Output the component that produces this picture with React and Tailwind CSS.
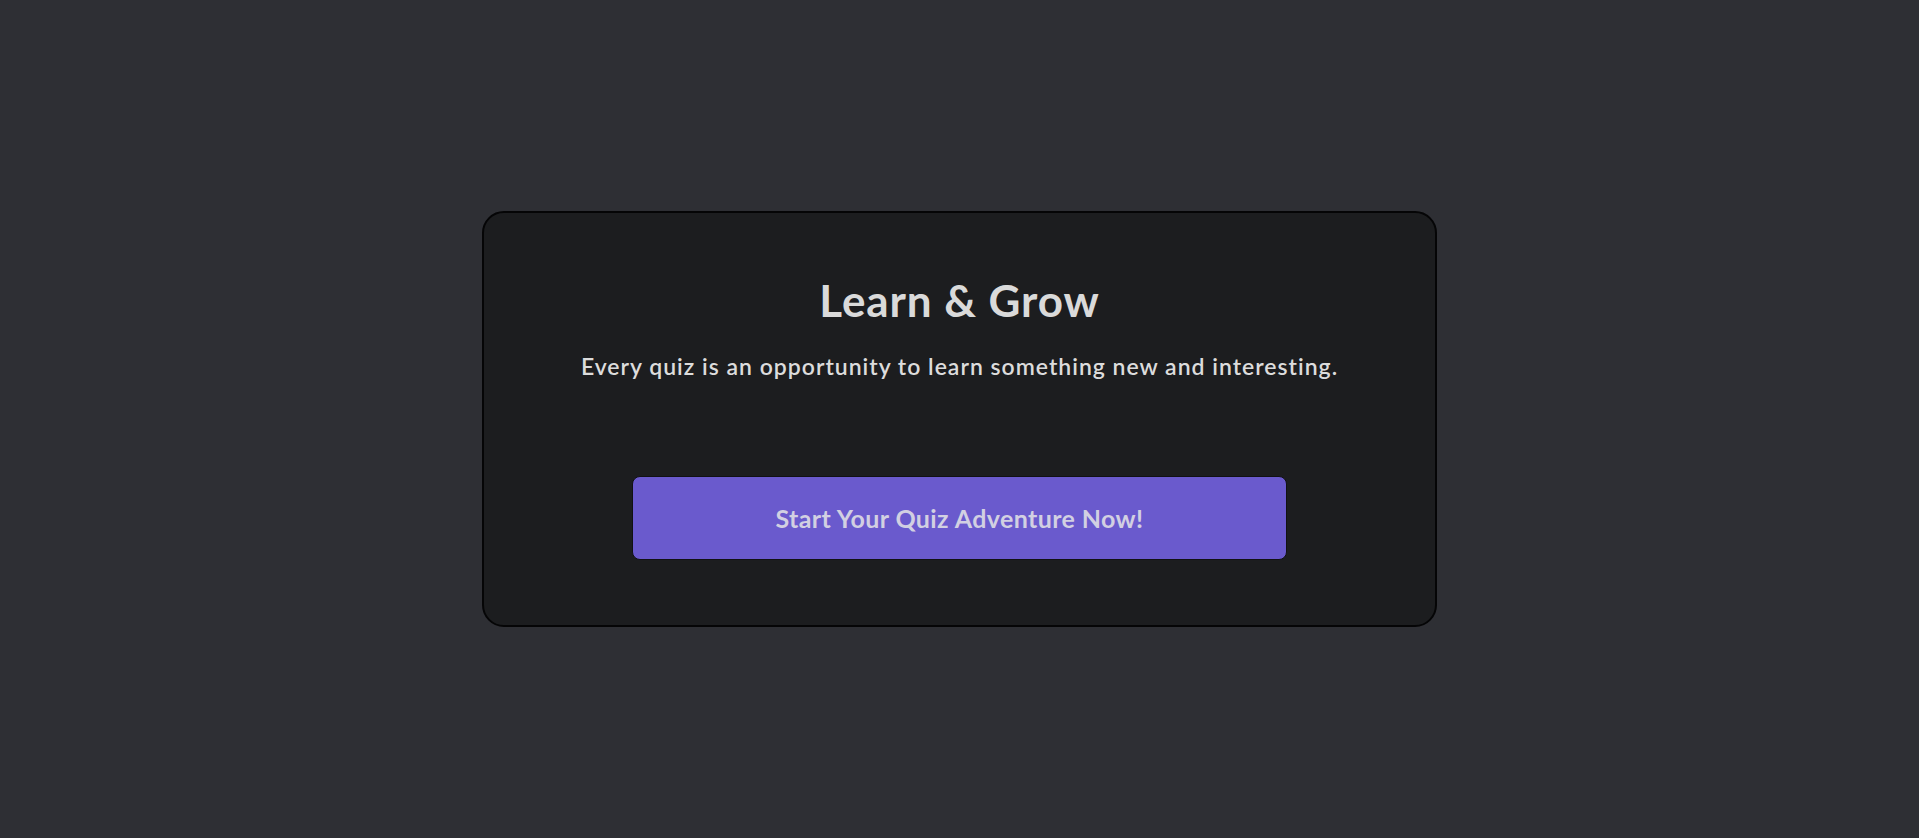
export default function App() {
  return (
    <div
      className="min-h-screen w-full bg-[#2e2f34] flex items-center justify-center"
      style={{ fontFamily: 'Lato, "Noto Sans", sans-serif' }}
    >
      <div className="w-[955px] h-[416px] bg-[#1c1d1f] border-2 border-[#050506] rounded-[22px] flex flex-col items-center pt-[61px]">
        <h1 className="text-[44px] leading-[1.2] font-bold tracking-[0.9px] text-[#dadada]">
          Learn &amp; Grow
        </h1>
        <p className="mt-[26px] text-[23px] leading-[1.2] font-semibold tracking-[1px] text-[#dcdcdc]">
          Every quiz is an opportunity to learn something new and interesting.
        </p>
        <button className="mt-[96px] w-[655px] h-[84px] bg-[#6a5acd] border border-[#111114] rounded-lg text-[25px] font-bold tracking-[0.4px] text-[#d2d0e2]">
          Start Your Quiz Adventure Now!
        </button>
      </div>
    </div>
  )
}
